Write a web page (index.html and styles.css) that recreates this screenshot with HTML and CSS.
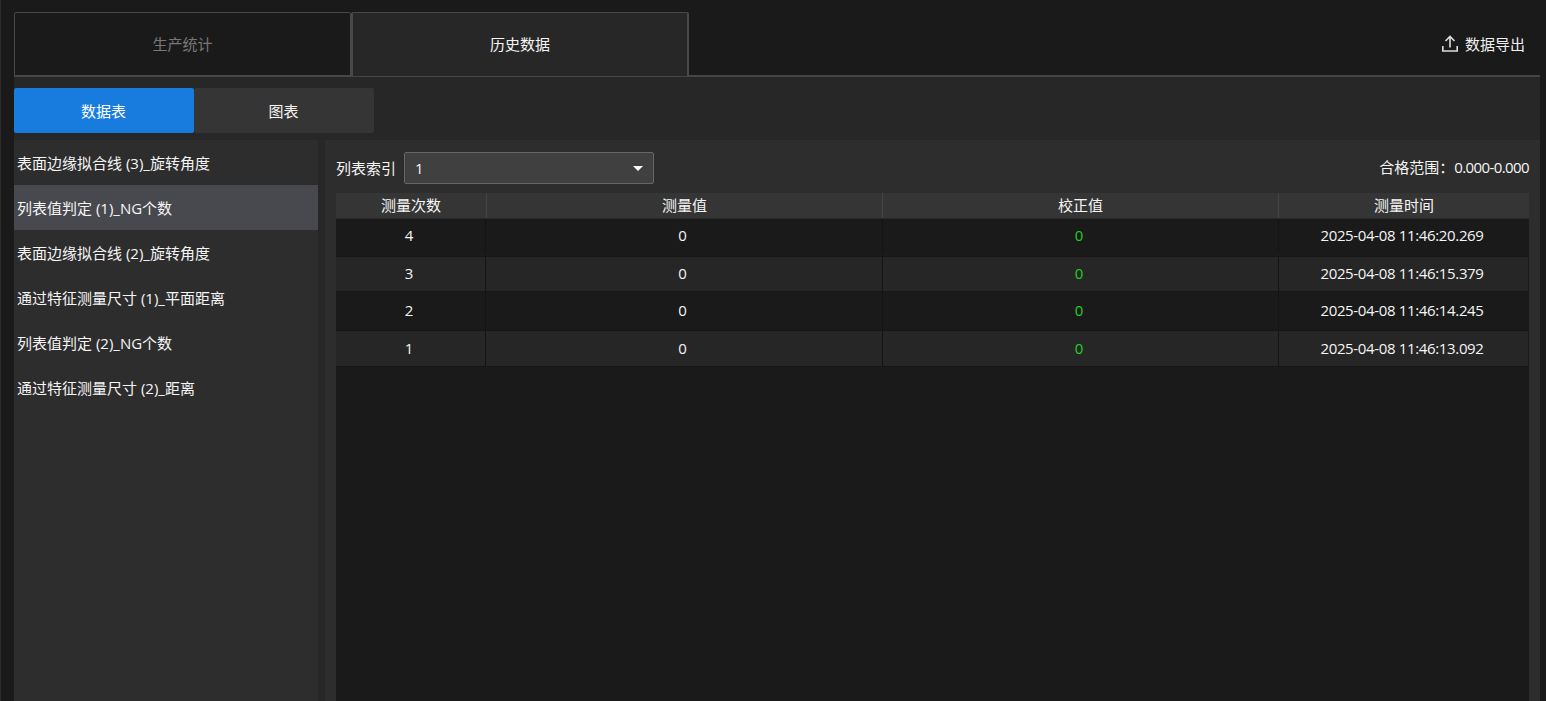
FILE: index.html
```html
<!DOCTYPE html>
<html lang="zh-CN">
<head>
<meta charset="utf-8">
<title>历史数据</title>
<link rel="stylesheet" href="styles.css">
</head>
<body>
<div class="app">
  <header class="topbar">
    <div class="tab">生产统计</div>
    <div class="tab tab-active">历史数据</div>
    <button class="export">
      <svg class="export-icon" width="16" height="17" viewBox="0 0 16 17" fill="none" stroke="#dcdcdc" stroke-width="1.6"><path d="M8 12.500V1.500M3.500 6 8 1.500 12.500 6M.8 11v5h14.400V11"/></svg>
      <span>数据导出</span>
    </button>
  </header>
  <section class="panel">
    <div class="switch">
      <div class="switch-btn switch-on">数据表</div>
      <div class="switch-btn">图表</div>
    </div>
    <div class="content">
      <nav class="side">
        <div class="side-item">表面边缘拟合线 (3)_旋转角度</div>
        <div class="side-item side-on">列表值判定 (1)_NG个数</div>
        <div class="side-item">表面边缘拟合线 (2)_旋转角度</div>
        <div class="side-item">通过特征测量尺寸 (1)_平面距离</div>
        <div class="side-item">列表值判定 (2)_NG个数</div>
        <div class="side-item">通过特征测量尺寸 (2)_距离</div>
      </nav>
      <main class="main">
        <div class="filter">
          <span class="filter-label">列表索引</span>
          <div class="select"><span>1</span><i class="caret"></i></div>
          <span class="range">合格范围：<span class="range-value">0.000-0.000</span></span>
        </div>
        <div class="table">
          <div class="row head"><div>测量次数</div><div>测量值</div><div>校正值</div><div>测量时间</div></div>
          <div class="row body r1"><div>4</div><div>0</div><div class="ok">0</div><div class="time">2025-04-08 11:46:20.269</div></div>
          <div class="row body r2 alt"><div>3</div><div>0</div><div class="ok">0</div><div class="time">2025-04-08 11:46:15.379</div></div>
          <div class="row body r3"><div>2</div><div>0</div><div class="ok">0</div><div class="time">2025-04-08 11:46:14.245</div></div>
          <div class="row body r4 alt"><div>1</div><div>0</div><div class="ok">0</div><div class="time">2025-04-08 11:46:13.092</div></div>
        </div>
      </main>
    </div>
  </section>
</div>
</body>
</html>
```
FILE: styles.css
```css
* { box-sizing: border-box; }
html, body { margin: 0; height: 100%; overflow: hidden; }
body {
  background: #1a1a1a;
  color: #f5f5f5;
  font: 15px/20px "Open Sans", "Noto Sans CJK SC", sans-serif;
}
.app {
  height: 701px;
  padding: 12px 6px 0 13px;
  display: flex;
  flex-direction: column;
  border-left: 1px solid #2b2b2b;
}
.topbar {
  display: flex;
  height: 65px;
  flex: none;
  border-bottom: 2px solid #454545;
}
.tab {
  width: 337px;
  height: 64px;
  border: 1px solid #484848;
  border-radius: 2px 2px 0 0;
  background: #1a1a1a;
  color: #777;
  display: flex;
  align-items: center;
  justify-content: center;
}
.tab-active {
  width: 338px;
  background: #272727;
  color: #f5f5f5;
  border-width: 1px 2px 0;
  padding-bottom: 1px;
}
.export {
  margin-left: auto;
  margin-right: 15px;
  padding: 0;
  background: none;
  border: 0;
  color: #f0f0f0;
  font: inherit;
  display: flex;
  align-items: center;
  gap: 7px;
}
.panel {
  flex: 1;
  min-height: 0;
  background: #272727;
  display: flex;
  flex-direction: column;
  padding-top: 11px;
}
.switch { display: flex; height: 45px; flex: none; }
.switch-btn {
  width: 180px;
  background: #353535;
  border-radius: 2px;
  display: flex;
  align-items: center;
  justify-content: center;
  padding-right: 1px;
}
.switch-on { background: #177cdd; color: #fff; }
.content { flex: 1; min-height: 0; display: flex; gap: 7px; margin-top: 7px; }
.side { width: 304px; background: #2d2d2d; flex: none; }
.side-item { height: 45px; padding-left: 3px; display: flex; align-items: center; }
.side-on { background: #48494e; }
.main {
  flex: 1;
  background: #2d2d2d;
  padding: 12px 11px 0;
  display: flex;
  flex-direction: column;
}
.filter { display: flex; align-items: center; height: 32px; flex: none; margin-bottom: 9px; }
.filter-label { margin-right: 8px; }
.select {
  width: 250px;
  height: 32px;
  background: #404040;
  border: 1px solid #666;
  border-radius: 2px;
  display: flex;
  align-items: center;
  justify-content: space-between;
  padding: 0 10px;
}
.caret {
  width: 0;
  height: 0;
  border-left: 5px solid transparent;
  border-right: 5px solid transparent;
  border-top: 5px solid #fff;
}
.range { margin-left: auto; padding-bottom: 2px; }
.range-value { letter-spacing: -0.6px; }
.table { flex: 1; background: #1a1a1a; }
.row {
  display: grid;
  grid-template-columns: 150px 397px 396px 1fr;
}
.row > div { display: flex; align-items: center; justify-content: center; border-right: 1px solid #141414; }
.row > div:last-child { border-right: 0; }
.head { height: 26px; background: #353535; border-bottom: 1px solid #2a2a2a; grid-template-columns: 151px 396px 396px 1fr; }
.head > div { border-right-color: #454545; padding-bottom: 2px; }
.body { margin-right: 1px; }
.body > div { padding: 0 3px 2px 0; }
.time { letter-spacing: -0.35px; }
.r1 { height: 38px; padding-bottom: 3px; }
.r2 { height: 35px; }
.r3 { height: 39px; }
.r4 { height: 36px; }
.alt { background: #262626; }
.r1, .r2, .r3, .r4 { border-bottom: 1px solid #161616; }
.ok { color: #1fd01f; }
```
